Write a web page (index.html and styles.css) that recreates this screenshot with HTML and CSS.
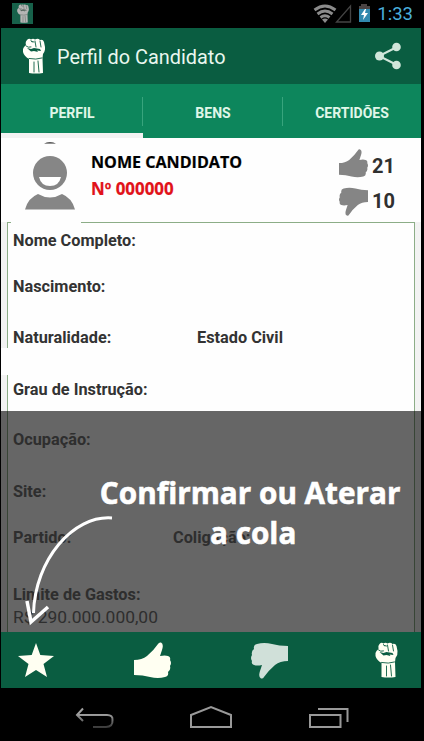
FILE: index.html
```html
<!DOCTYPE html>
<html lang="pt-BR">
<head>
<meta charset="utf-8">
<title>Perfil do Candidato</title>
<link rel="stylesheet" href="styles.css">
</head>
<body>
<svg class="defs" width="0" height="0">
  <symbol id="fist" viewBox="0 0 22 36">
    <path fill="currentColor" d="M0 11 L1 9 L3 7 Q2 4 4 2 Q6 0 8 1.500 Q10 0 12 1.500 Q15 0 17 2 Q20 1 21 4 L22 9 Q22.500 13 20 16 L19.500 20 L20 35 Q13 36 6 35 L6 21 Q1 18 0 14Z"/>
    <path fill="none" stroke="var(--line)" stroke-width=".9" stroke-linecap="round" d="M3 8 Q5 10 8 9 M8 2.500 L9 4 M12 3 L13 9 M17 3 L18 9 M9 3.500 L11 4 M6 20.500 Q13 22 19 20 M11 24 V34 M15 23 L16 34"/>
    <path fill="var(--line)" d="M4 10 L8 11 L11 10 L17 11 L18 13 L14 12.500 L15 14 L11 13 L8 13.500Z"/>
  </symbol>
  <symbol id="thumb" viewBox="0 0 37 37">
    <path fill="currentColor" d="M0 18 Q8 18 13 14 Q20 8 24 2 Q25 0 27 .5 Q30 2 28 8 L26 14 Q31 13 34 14 Q37 15 36 18 Q38 21 36 24 Q37 28 34 30 Q35 34 31 35 Q24 37 16 35 Q9 33 0 33Z"/>
  </symbol>
</svg>
<div class="phone">
  <header class="status">
    <span class="badge"><svg class="badge-fist"><use href="#fist"/></svg></span>
    <span class="status-right">
      <svg width="57" height="20" viewBox="0 0 57 20">
        <g fill="none" stroke="#8b8b8b" stroke-width="2.900"><path d="M1.500 6 Q12 -2 22.500 6"/><path d="M4.500 10 Q12 4 19.500 10"/><path d="M7.500 13.500 Q12 10 16.500 13.500"/></g>
        <path fill="#8b8b8b" d="M9 15.500 Q12 13.500 15 15.500 L12 19Z"/>
        <path fill="none" stroke="#444" stroke-width="1.300" d="M23.500 18 H37.500 V2Z"/>
        <path fill="#4b4444" d="M46 2 H48 V0 H54 V2 H57 V6 H46Z"/><path fill="#3189ae" d="M46 5 H57 V18 H46Z"/><path fill="#fff" d="M52 5 L48 11 H51 L50 16 L55 9 H52 L53 5Z"/>
      </svg>
      <span class="clock">1:33</span>
    </span>
  </header>
  <div class="appbar">
    <svg class="app-fist"><use href="#fist"/></svg>
    <h1>Perfil do Candidato</h1>
    <svg class="share" width="26" height="28" viewBox="0 0 26 28"><path fill="none" stroke="#d0e6da" stroke-width="2" d="M22 5 L4 14 L22 23"/><g fill="#d0e6da"><circle cx="4.500" cy="14" r="4.500"/><circle cx="21.500" cy="5" r="4.300"/><circle cx="21.500" cy="23" r="4.300"/></g></svg>
  </div>
  <nav class="tabs"><span class="tab active">PERFIL</span><span class="tab">BENS</span><span class="tab">CERTIDÕES</span></nav>
  <section class="candidate">
    <svg class="avatar" width="50" height="68" viewBox="0 0 50 68"><path fill="#222" d="M19 1.500 Q25 -1 31 1.500Z"/><circle cx="25" cy="31" r="17" fill="#868686"/><path fill="#fff" d="M14 35 H36 Q34 44 25 44 Q16 44 14 35Z"/><path fill="#868686" d="M0 67.500 Q3 56 13 52 Q25 59 37 52 Q47 56 50 67.500Z"/></svg>
    <div class="ident"><strong class="name">NOME CANDIDATO</strong><strong class="number">Nº 000000</strong></div>
    <div class="votes">
      <div class="vote"><svg class="small-thumb"><use href="#thumb"/></svg><b>21</b></div>
      <div class="vote"><svg class="small-thumb down"><use href="#thumb"/></svg><b>10</b></div>
    </div>
  </section>
  <main class="details">
    <div class="sheet">
      <div class="row r1"><b>Nome Completo:</b></div>
      <div class="row r2"><b>Nascimento:</b></div>
      <div class="row r3"><b>Naturalidade:</b><b>Estado Civil</b></div>
      <div class="row r4"><b>Grau de Instrução:</b></div>
      <div class="row shaded r5"><b>Ocupação:</b></div>
      <div class="row shaded r6"><b>Site:</b></div>
      <div class="row shaded r7"><b>Partido:</b><b>Coligação:</b></div>
      <div class="row shaded r8"><b>Limite de Gastos:</b></div>
      <div class="row shaded r9"><span>R$ 290.000.000,00</span></div>
    </div>
    <i class="gap-top"></i><i class="gap-left"></i>
    <div class="overlay">
      <svg class="arrow" width="420" height="221" viewBox="1 411 420 221"><path fill="none" stroke="#fff" stroke-width="3" d="M112 518 C73 515 35 560 33.500 613"/><path fill="none" stroke="#fff" stroke-width="3.500" d="M27 601 L31 622 L48 607"/></svg>
      <p class="hint"><span class="hint-a">Confirmar ou Aterar</span><span class="hint-b">a cola</span></p>
    </div>
  </main>
  <footer class="actions">
    <svg class="star" viewBox="0 0 36 34"><path fill="#fffff2" d="M18 0 L22.300 12 L36 13 L25.500 21 L29 34 L18 27 L7 34 L10.500 21 L0 13 L13.700 12Z"/></svg>
    <svg class="like"><use href="#thumb"/></svg>
    <svg class="dislike"><use href="#thumb"/></svg>
    <svg class="foot-fist"><use href="#fist"/></svg>
  </footer>
  <nav class="system">
    <svg width="424" height="53" viewBox="0 688 424 53"><defs><linearGradient id="fade" x1="0" y1="0" x2="0" y2="1"><stop offset="0.300" stop-color="#a0a0a0"/><stop offset="1" stop-color="#3c3c3c"/></linearGradient></defs><g fill="none" stroke="#999" stroke-width="2"><path stroke="url(#fade)" d="M83 708.500 L77 715 L83 721 M77 715 H107 Q113 715 112.500 720 Q113 727 106 727 H93"/><path d="M191 727 V715 L211 707 L231 715 V727Z"/><path d="M310 715 H340.500 V727 H310Z M318 709 H347.500 V722"/></g></svg>
  </nav>
</div>
</body>
</html>
```
FILE: styles.css
```css
* { box-sizing: border-box; }
body { margin: 0; background: #000; font-family: Roboto, "Liberation Sans", sans-serif; }
.defs { position: absolute; }
.phone { width: 424px; height: 741px; padding: 0 3px 0 1px; overflow: hidden; background: #000; }
.status { height: 28px; display: flex; justify-content: space-between; align-items: center; padding: 0 8px 0 11px; }
.badge { width: 21px; height: 21px; margin-top: -1px; display: flex; align-items: center; justify-content: center; background: #17614a; color: #b5b5b5; --line: #56665f; }
.badge-fist { width: 12px; height: 19px; }
.status-right { display: flex; align-items: center; gap: 7px; }
.clock { color: #4aaedb; font-size: 18.500px; line-height: 28px; }
.appbar { height: 56px; display: flex; align-items: center; padding: 0 20px 0 22px; background: #0a5d41; color: #fffff8; --line: #0a5d41; }
.app-fist { width: 22px; height: 36px; }
.appbar h1 { margin: 2px 0 0 12px; font-size: 19.900px; font-weight: 400; color: #e9f7ef; white-space: nowrap; }
.share { margin-left: auto; }
.tabs { height: 54px; display: grid; grid-template-columns: 142px 140px 138px; background: #0d865c; }
.tab { display: flex; align-items: center; justify-content: center; padding-top: 3px; font-size: 14px; font-weight: 700; color: #e0f7e9; background: linear-gradient(#38a47d, #38a47d) right 13px / 1px 29px no-repeat; }
.tab:last-child { background: none; }
.tab.active { border-bottom: 5px solid #f2f2f2; padding-top: 8px; }
.candidate { height: 84px; display: flex; background: #fefefe; }
.avatar { margin: 4px 0 0 24px; }
.ident { display: flex; flex-direction: column; margin: 13px 0 0 16px; font-family: "Open Sans", "Noto Sans", sans-serif; font-size: 16.100px; line-height: 22px; white-space: nowrap; }
.name { -webkit-text-stroke: .2px; }
.number { margin-top: 5px; color: #e11219; font-size: 16.900px; -webkit-text-stroke: .2px; }
.votes { margin: 8px 0 0 auto; width: 82px; font-size: 20px; color: #303030; }
.vote { height: 35px; display: flex; align-items: center; gap: 4px; }
.vote b { padding-top: 4px; }
.small-thumb { width: 29px; height: 29px; color: #858585; }
.small-thumb.down { transform: translateY(3px) rotate(180deg); }
.details { position: relative; height: 410px; padding: 0 6px; background: #f2f2f2; }
.sheet { height: 410px; border: 1px solid #8cad87; border-bottom: 0; background: #fefefe; padding: 7px 0 0 5px; color: #333; font-size: 16.300px; line-height: 22px; }
.row { display: flex; height: 22px; white-space: nowrap; }
.shaded { color: #747474; }
.r2 { margin-top: 24px; } .r3 { margin-top: 29px; } .r4 { margin-top: 30px; }
.r5 { margin-top: 28px; } .r6 { margin-top: 30px; } .r7 { margin-top: 24px; } .r8 { margin-top: 35px; }
.r9 { font-size: 17.400px; }
.r3 b:first-child { width: 184px; } .r7 b:first-child { width: 160px; }
.gap-top { position: absolute; left: 10px; top: 0; width: 70px; height: 1px; background: #fefefe; }
.gap-left { position: absolute; left: 0; top: 126px; width: 8px; height: 27px; background: #fefefe; }
.overlay { position: absolute; left: 0; top: 189px; width: 420px; height: 221px; background: rgba(0, 0, 0, .6); }
.arrow { position: absolute; left: 0; top: 0; }
.hint { margin: 0; padding: 61px 0 0 99px; display: flex; flex-direction: column; width: 420px; color: #fff; font: 700 31px/40px "Open Sans", "Noto Sans", sans-serif; white-space: nowrap; transform: translateX(4px) scaleX(.958); transform-origin: 0 0; -webkit-text-stroke: .6px #fff; }
.hint-b { padding-left: 115px; }
.actions { height: 56px; display: flex; align-items: center; padding: 0 23px 0 17px; background: #0a5d41; color: #fffff2; --line: #0a5d41; }
.star { width: 36px; height: 34px; }
.like { width: 37px; height: 37px; margin-left: 80px; }
.dislike { width: 37px; height: 37px; margin-left: 80px; transform: rotate(180deg); color: #d0e0d9; }
.foot-fist { width: 23px; height: 36px; margin-left: auto; }
.system { height: 53px; margin-left: -1px; }
.system svg { display: block; }
```
